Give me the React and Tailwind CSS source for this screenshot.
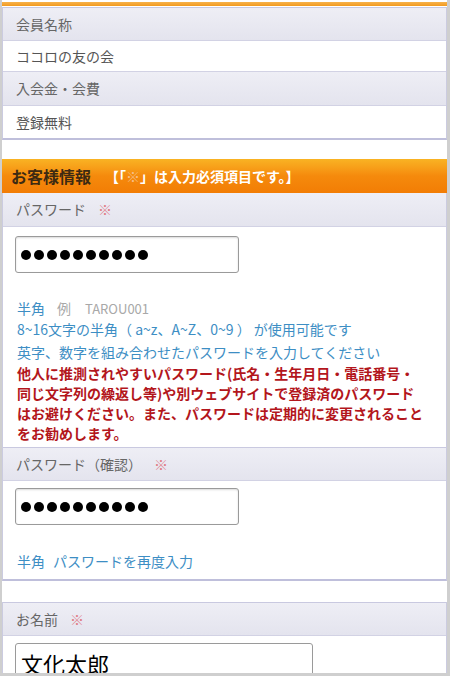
import React from 'react';

const font = { fontFamily: '"Noto Sans CJK JP", "Noto Sans", sans-serif' };

const Req = () => <span className="ml-3 text-[#e07a86]">※</span>;

const Header = ({ children, top }) => (
  <div
    className={`h-[34px] flex items-center px-[13px] text-[14px] text-[#666] bg-gradient-to-b from-[#eeeef5] to-[#e4e4ee] border-b border-[#d2d2e4] ${top ? 'border-t border-t-[#c9c9e0]' : ''}`}
  >
    {children}
  </div>
);

const Dots = () => (
  <div className="flex items-center gap-[3px] pl-[5px]">
    {Array.from({ length: 10 }).map((_, i) => (
      <span key={i} className="w-[10px] h-[10px] rounded-full bg-black" />
    ))}
  </div>
);

const PassBox = () => (
  <div className="w-[224px] h-[37px] flex items-center border border-[#9a9a9a] rounded-[3px] bg-white shadow-[inset_0_1px_2px_rgba(0,0,0,0.15)]">
    <Dots />
  </div>
);

export default function App() {
  return (
    <div style={font} className="w-[450px] h-[676px] overflow-hidden bg-[#cfcfcf] pl-[2px] pr-[3px] pb-[3px]">
      <div className="h-full bg-white overflow-hidden">
        <div className="h-[2px] bg-white" />
        <div className="h-[4px] bg-gradient-to-b from-[#f7b24a] to-[#f29a1a]" />
        <div className="h-[1px]" />

        {/* 会員情報 */}
        <div className="border-x border-[#cbcbe0] border-b-2 border-b-[#bfbfdb]">
          <Header top>会員名称</Header>
          <div className="h-[31px] flex items-center px-[13px] text-[14px] text-[#555] border-b border-[#d2d2e4]">
            ココロの友の会
          </div>
          <Header>入会金・会費</Header>
          <div className="h-[32px] flex items-center px-[13px] text-[14px] text-[#555]">登録無料</div>
        </div>

        <div className="h-[19px]" />

        {/* お客様情報 */}
        <div className="h-[34px] flex items-center px-[9px] bg-gradient-to-b from-[#f9b323] via-[#f58a0c] to-[#f27d05]">
          <span className="text-[16px] font-bold text-[#3d2a12]">お客様情報</span>
          <span className="ml-[14px] text-[14px] font-bold text-white">
            【「<span className="text-[#f5c08a]">※</span>」は入力必須項目です。】
          </span>
        </div>

        <div className="border-x border-[#cbcbe0] border-b-2 border-b-[#bfbfdb]">
          <Header>
            パスワード<Req />
          </Header>
          <div className="px-[12px] pt-[9px] pb-[4px]">
            <PassBox />
            <div className="mt-[25px] pl-[2px] text-[14px] leading-[21px]">
              <div>
                <span className="text-[#3d8ec4]">半角</span>
                <span className="ml-[12px] text-[#a8a8a8]">例</span>
                <span className="ml-[14px] text-[13px] text-[#a8a8a8]">TAROU001</span>
              </div>
              <div className="text-[#3d8ec4]">8~16文字の半角（ a~z、A~Z、0~9 ） が使用可能です</div>
              <div className="text-[#3d8ec4] mt-[2px]">英字、数字を組み合わせたパスワードを入力してください</div>
              <div className="text-[#b3161c] font-bold leading-[20px] whitespace-nowrap">
                他人に推測されやすいパスワード(氏名・生年月日・電話番号・
                <br />
                同じ文字列の繰返し等)や別ウェブサイトで登録済のパスワード
                <br />
                はお避けください。また、パスワードは定期的に変更されること
                <br />
                をお勧めします。
              </div>
            </div>
          </div>
          <Header top>
            パスワード（確認）<Req />
          </Header>
          <div className="px-[12px] pt-[7px] pb-[8px]">
            <PassBox />
            <div className="mt-[26px] pl-[2px] text-[14px] leading-[20px] text-[#3d8ec4]">
              半角<span className="ml-[8px]">パスワードを再度入力</span>
            </div>
          </div>
        </div>

        <div className="h-[21px]" />

        <div className="border-x border-[#cbcbe0]">
          <Header top>
            お名前<Req />
          </Header>
          <div className="px-[12px] pt-[7px]">
            <div className="w-[298px] h-[40px] flex items-center px-[5px] border border-[#9a9a9a] rounded-[3px] text-[22px] leading-[28px] text-black">
              文化太郎
            </div>
          </div>
        </div>
      </div>
    </div>
  );
}
